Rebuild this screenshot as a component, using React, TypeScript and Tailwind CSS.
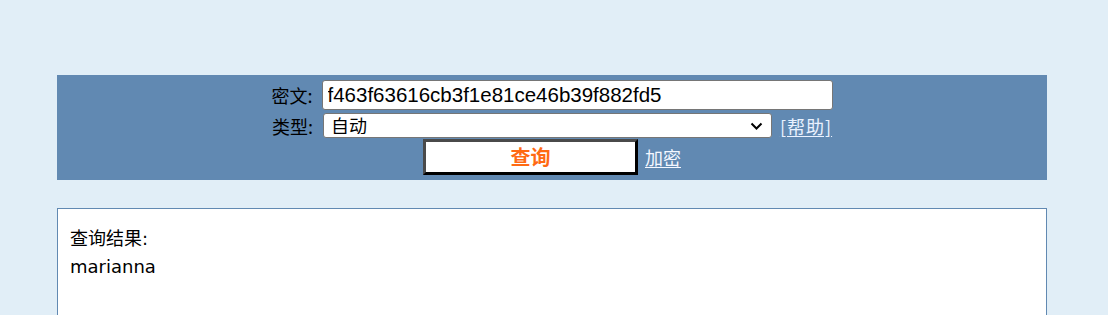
export default function App() {
  return (
    <main className="min-h-screen bg-[#e1eef7] pt-[75px] font-['Noto_Sans_CJK_SC',sans-serif] text-black">
      {/* query bar */}
      <form className="ml-[57px] flex w-[990px] flex-col items-center bg-[#6189b2] pt-[5px] pb-[5px]">
        <div className="flex h-[30px] items-center">
          <label className="mr-[9px] text-[18px] leading-none">密文:</label>
          <input
            defaultValue="f463f63616cb3f1e81ce46b39f882fd5"
            className="h-[30px] w-[511px] rounded-[3px] border border-[#767676] bg-white px-[5px] font-['Liberation_Sans',Arial,sans-serif] text-[20.5px] text-black outline-none"
          />
        </div>

        <div className="mt-[3px] flex h-[25px] items-center">
          <label className="mr-[10px] text-[18px] leading-none">类型:</label>
          <div className="relative">
            <select className="h-[25px] w-[449px] appearance-none rounded-[3px] border border-[#767676] bg-white pl-[7px] text-[18px] leading-none text-black outline-none">
              <option>自动</option>
            </select>
            <svg
              className="pointer-events-none absolute top-[8px] right-[9px] h-[10px] w-[13px]"
              viewBox="0 0 13 10"
              fill="none"
              stroke="#000"
              strokeWidth="2"
            >
              <path d="M1.5 2.5 6.5 7.5 11.5 2.5" />
            </svg>
          </div>
          <a href="#" className="ml-[8px] text-[18px] leading-none tracking-[1px] text-[#eaf2ff] underline underline-offset-2">
            [帮助]
          </a>
        </div>

        <div className="mt-[1px] flex h-[36px] items-center">
          <button
            type="button"
            className="h-[36px] w-[215px] border-[3px] border-t-[#4a4a4a] border-r-black border-b-black border-l-[#4a4a4a] bg-white text-[20px] leading-none font-bold text-[#ff6a13]"
          >
            查询
          </button>
          <a href="#" className="ml-[7px] text-[18px] leading-none text-[#f4f7ff] underline underline-offset-2">
            加密
          </a>
        </div>
      </form>

      {/* result */}
      <section className="mt-[28px] ml-[57px] h-[140px] w-[990px] border border-[#6189b2] bg-white pt-[16px] pl-[12px] font-['DejaVu_Sans','Noto_Sans_CJK_SC',sans-serif] text-[18px] leading-[28px]">
        <div>查询结果:</div>
        <div>marianna</div>
      </section>
    </main>
  );
}
